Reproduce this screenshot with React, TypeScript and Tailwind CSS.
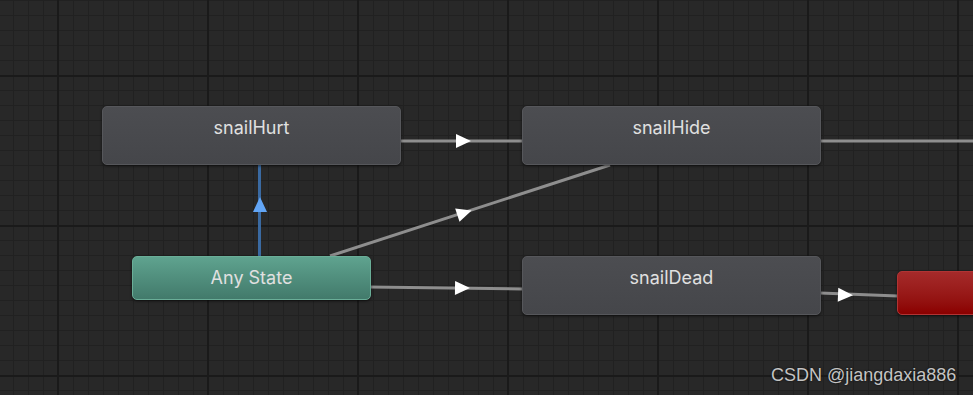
import React from "react";

type NodeProps = {
  label: string;
  className: string;
};

function StateNode({ label, className }: NodeProps) {
  return (
    <div
      className={`absolute flex justify-center rounded-[5px] text-[18px] leading-[26px] text-[#e0e0e0] shadow-[0_1px_3px_rgba(0,0,0,0.6)] ${className}`}
    >
      {label}
    </div>
  );
}

// arrow head pointing right, centred at 0,0
function Head({ x, y, angle, fill = "#ffffff" }: { x: number; y: number; angle: number; fill?: string }) {
  return (
    <polygon
      points="-7,-7 -7,7 8,0"
      fill={fill}
      transform={`translate(${x} ${y}) rotate(${angle})`}
    />
  );
}

export default function App() {
  const diag = (Math.atan2(165 - 256, 610 - 330) * 180) / Math.PI;

  return (
    <div className="relative h-[395px] w-[973px] overflow-hidden bg-[#282828] font-['Inter',sans-serif]">
      {/* grid */}
      <svg className="absolute inset-0" width="973" height="395">
        <defs>
          <pattern id="minor" x="13" y="0" width="15" height="15" patternUnits="userSpaceOnUse">
            <rect x="0" y="0" width="1" height="15" fill="#212121" />
            <rect x="0" y="0" width="15" height="1" fill="#212121" />
          </pattern>
          <pattern id="major" x="57" y="75" width="150" height="150" patternUnits="userSpaceOnUse">
            <rect x="0" y="0" width="2" height="150" fill="#1a1a1a" />
            <rect x="0" y="0" width="150" height="2" fill="#1a1a1a" />
          </pattern>
        </defs>
        <rect width="973" height="395" fill="url(#minor)" />
        <rect width="973" height="395" fill="url(#major)" />
      </svg>

      {/* transitions */}
      <svg className="absolute inset-0" width="973" height="395">
        <g stroke="#8e8e8e" strokeWidth="3">
          <line x1="400" y1="141" x2="523" y2="141" />
          <line x1="820" y1="141" x2="973" y2="141" />
          <line x1="330" y1="256" x2="610" y2="165" />
          <line x1="370" y1="287" x2="523" y2="289" />
          <line x1="820" y1="293" x2="898" y2="296" />
        </g>
        <line x1="259.5" y1="165" x2="259.5" y2="257" stroke="#3a6aa2" strokeWidth="3" />
        <Head x={463} y={141} angle={0} />
        <Head x={464} y={213} angle={diag} />
        <Head x={462} y={288} angle={0.8} />
        <Head x={845} y={295} angle={2.2} />
        <Head x={260} y={205} angle={-90} fill="#62a5f5" />
      </svg>

      {/* states */}
      <StateNode
        label="snailHurt"
        className="left-[102px] top-[106px] h-[59px] w-[299px] border border-[#56575b] bg-gradient-to-b from-[#4c4d51] to-[#45464a] pt-[8px]"
      />
      <StateNode
        label="snailHide"
        className="left-[522px] top-[106px] h-[59px] w-[299px] border border-[#56575b] bg-gradient-to-b from-[#4c4d51] to-[#45464a] pt-[8px]"
      />
      <StateNode
        label="snailDead"
        className="left-[522px] top-[256px] h-[59px] w-[299px] border border-[#56575b] bg-gradient-to-b from-[#4c4d51] to-[#45464a] pt-[8px]"
      />
      <StateNode
        label="Any State"
        className="left-[132px] top-[256px] h-[44px] w-[239px] border border-[#6aae98] bg-gradient-to-b from-[#5fa38f] to-[#427a6b] items-center"
      />
      <div className="absolute left-[897px] top-[271px] h-[44px] w-[90px] rounded-[5px] border border-[#b03434] bg-gradient-to-b from-[#a52a2a] to-[#8b0000] shadow-[0_1px_3px_rgba(0,0,0,0.6)]" />

      {/* watermark */}
      <div className="absolute left-[771px] top-[362px] font-['Liberation_Sans',sans-serif] text-[18px] text-[#c4c4c4] [text-shadow:0_0_2px_rgba(0,0,0,0.8)]">
        CSDN @jiangdaxia886
      </div>
    </div>
  );
}
